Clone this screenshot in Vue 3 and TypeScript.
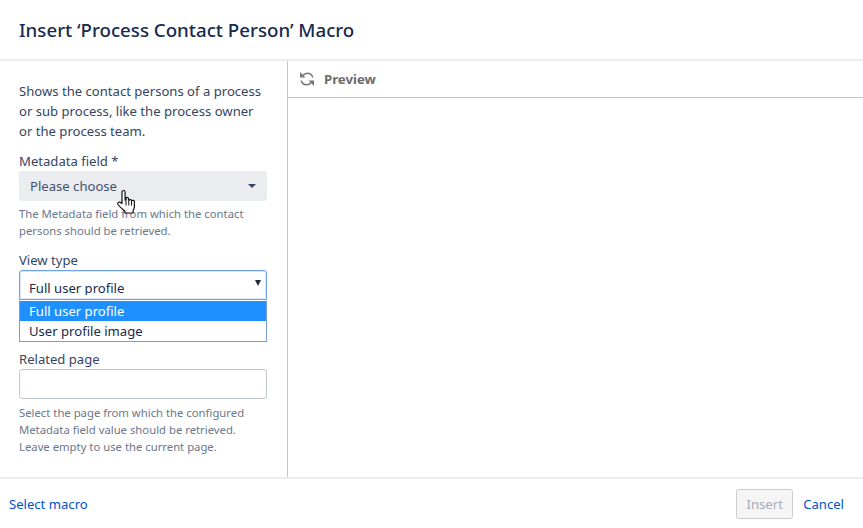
<script setup lang="ts">
const viewTypes: string[] = ['Full user profile', 'User profile image']
</script>

<template>
  <main class="dialog">
    <header class="head">
      <h1>Insert ‘Process Contact Person’ Macro</h1>
    </header>

    <div class="content">
      <section class="form">
        <p class="intro">Shows the contact persons of a process or sub process, like the process owner or the process team.</p>

        <div class="field first">
          <label>Metadata field *</label>
          <div class="choose">
            <span>Please choose</span>
            <i class="caret"></i>
            <svg class="pointer" width="21" height="26" viewBox="0 0 21 26">
              <path d="M6.500 1.500c1 0 1.600.7 1.600 1.700v8l1-.3V8.700c1.300-.7 2.300-.2 2.400.8v1.500l.9-.1c.9-.6 2-.3 2.200.7l.8-.1c1.100-.4 2 .2 2 1.300v5.200c0 1.500-.6 2.400-1.300 3.500v2.500H8v-1.800C6 20.500 3 18.500 1 15.500c-.6-1-.2-1.900.6-2.200.8-.3 2 .1 3.400 1.100V3.200c0-1 .6-1.700 1.500-1.700z" fill="#fff" stroke="#111" stroke-width="1.200" stroke-linejoin="round" />
              <path d="M9 11.500v5M11.800 11v5.500M14.500 11.500v5" fill="none" stroke="#111" stroke-width="1" />
            </svg>
          </div>
          <p class="hint">The Metadata field from which the contact persons should be retrieved.</p>
        </div>

        <div class="field">
          <label>View type</label>
          <div class="native">
            <div class="native-box">
              <span>Full user profile</span>
              <i class="native-arrow"></i>
            </div>
            <ul class="options">
              <li v-for="(opt, i) in viewTypes" :key="opt" :class="{ active: i === 0 }">{{ opt }}</li>
            </ul>
          </div>
        </div>

        <div class="field">
          <label>Related page</label>
          <input class="text" type="text" />
          <p class="hint">Select the page from which the configured Metadata field value should be retrieved. Leave empty to use the current page.</p>
        </div>
      </section>

      <section class="preview">
        <div class="preview-bar">
          <svg class="refresh" width="16" height="16" viewBox="0 0 16 16">
            <path d="M4 4.500C5 3 6.400 2.200 8.200 2.200c2.700 0 4.900 1.800 5.600 4.300" fill="none" stroke="#777" stroke-width="1.500" />
            <path d="M1 1v5.500h5.500z" fill="#777" />
            <path d="M12 11.500c-1 1.500-2.400 2.300-4.200 2.300-2.700 0-4.900-1.800-5.600-4.300" fill="none" stroke="#777" stroke-width="1.500" />
            <path d="M15 15V9.500H9.500z" fill="#777" />
          </svg>
          <span>Preview</span>
        </div>
      </section>
    </div>

    <footer class="foot">
      <a class="link">Select macro</a>
      <div class="actions">
        <button disabled>Insert</button>
        <a class="link">Cancel</a>
      </div>
    </footer>
  </main>
</template>

<style>
html,
body {
  margin: 0;
  background: #fff;
}
</style>

<style scoped>
.dialog {
  width: 863px;
  height: 528px;
  display: flex;
  flex-direction: column;
  font-family: "Noto Sans", sans-serif;
  font-size: 13.1px;
  line-height: 20px;
  color: #172b4d;
  overflow: hidden;
}

.head {
  height: 59px;
  flex: none;
  border-bottom: 2px solid #ebecf0;
  display: flex;
  align-items: center;
  padding-left: 19px;
}

h1 {
  margin: 0;
  font-size: 18.7px;
  font-weight: 500;
  line-height: 24px;
  color: #172b4d;
}

.content {
  flex: 1;
  display: flex;
  min-height: 0;
}

.form {
  width: 288px;
  flex: none;
  box-sizing: border-box;
  border-right: 1px solid #c1c7d0;
  padding: 20px 20px 0 19px;
}

.intro {
  margin: 0;
  color: #344563;
}

.field {
  margin-top: 11px;
}

.field.first {
  margin-top: 10px;
}

label {
  display: block;
  color: #344563;
}

.choose {
  position: relative;
  height: 30px;
  background: #ebecf0;
  border-radius: 3px;
  display: flex;
  align-items: center;
  justify-content: space-between;
  padding: 0 11px;
  color: #42526e;
}

.caret {
  width: 0;
  height: 0;
  border-left: 4px solid transparent;
  border-right: 4px solid transparent;
  border-top: 4px solid #344563;
}

.pointer {
  position: absolute;
  left: 98px;
  top: 18px;
}

.hint {
  margin: 4px 0 0;
  font-size: 11.3px;
  line-height: 17px;
  color: #6b778c;
}

.native {
  position: relative;
  margin-bottom: 49px;
}

.native-box {
  height: 30px;
  box-sizing: border-box;
  border: 1px solid #6f9ff0;
  border-radius: 3px 3px 0 0;
  box-shadow: inset 0 0 0 1px #dbe7fb;
  background: #fff;
  padding: 7px 9px 0;
  color: #172b4d;
}

.native-box span {
  display: block;
  height: 17px;
  overflow: hidden;
}

.native-arrow {
  position: absolute;
  right: 6px;
  top: 10px;
  width: 0;
  height: 0;
  border-left: 3.5px solid transparent;
  border-right: 3.5px solid transparent;
  border-top: 6px solid #1c2b45;
}

.options {
  position: absolute;
  left: 0;
  right: 0;
  top: 30px;
  margin: 0;
  padding: 0;
  list-style: none;
  background: #fff;
  border: 1px solid #7a9cdb;
  border-top-color: #fff;
  z-index: 2;
}

.options li {
  height: 20px;
  padding: 0 9px;
  color: #172b4d;
}

.options li.active {
  background: #1e90ff;
  color: #fff;
}

.text {
  display: block;
  width: 100%;
  height: 30px;
  box-sizing: border-box;
  border: 1px solid #c1c7d0;
  border-radius: 3px;
  background: #fff;
  padding: 0 10px;
  margin-bottom: 5px;
}

.preview {
  flex: 1;
  min-width: 0;
}

.preview-bar {
  height: 36px;
  border-bottom: 1px solid #c1c7d0;
  display: flex;
  align-items: center;
  gap: 9px;
  padding-left: 11px;
  font-weight: 700;
  font-size: 13.2px;
  color: #6b6b6b;
}

.foot {
  height: 49px;
  flex: none;
  border-top: 2px solid #ebecf0;
  display: flex;
  align-items: center;
  justify-content: space-between;
  padding: 0 19px 0 9px;
}

.link {
  color: #0052cc;
  cursor: pointer;
}

.actions {
  display: flex;
  align-items: center;
  gap: 10px;
}

button {
  width: 57px;
  height: 30px;
  font: inherit;
  color: #a5adba;
  background: #f5f5f5;
  border: 1px solid #ccc;
  border-radius: 3px;
  padding: 0;
}
</style>
